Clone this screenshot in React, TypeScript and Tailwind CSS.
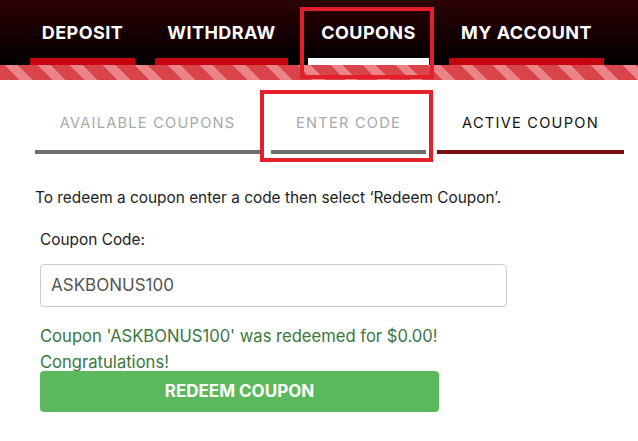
const mainTabs = [
  { label: "DEPOSIT", w: "w-[105px]", bar: "bg-[#c4060c]" },
  { label: "WITHDRAW", w: "w-[133px]", bar: "bg-[#c4060c]" },
  { label: "COUPONS", w: "w-[121px]", bar: "bg-white" },
  { label: "MY ACCOUNT", w: "w-[155px]", bar: "bg-[#c4060c]" },
]

const subTabs = [
  { label: "AVAILABLE COUPONS", w: "w-[225px]", text: "text-[#a8a8a8]", bar: "bg-[#6e6e6e]" },
  { label: "ENTER CODE", w: "w-[155px]", text: "text-[#a8a8a8]", bar: "bg-[#6e6e6e]" },
  { label: "ACTIVE COUPON", w: "w-[187px]", text: "text-[#111]", bar: "bg-[#7a1014]" },
]

export default function App() {
  return (
    <div className="relative w-[638px] h-[441px] overflow-hidden bg-white font-['Inter',sans-serif]">
      {/* top nav */}
      <div className="h-[65px] bg-[linear-gradient(180deg,#2c0306_0%,#140002_55%,#000_100%)] flex items-end gap-5 pl-[30px]">
        {mainTabs.map((t) => (
          <div key={t.label} className={`${t.w} flex flex-col items-center`}>
            <span className="text-white font-bold text-[18px] tracking-[0.025em] leading-[20px] mb-[15px]">{t.label}</span>
            <div className={`h-[7px] w-full ${t.bar}`} />
          </div>
        ))}
      </div>
      <div className="h-[15px] bg-[repeating-linear-gradient(45deg,#d9434a_0px,#d9434a_14px,#eb8488_14px,#eb8488_23px)]" />

      {/* sub tabs */}
      <div className="flex gap-[11px] pl-[35px] pt-[33px]">
        {subTabs.map((t) => (
          <div key={t.label} className={`${t.w} flex flex-col items-center`}>
            <span className={`${t.text} text-[14.6px] tracking-[0.085em] leading-[20px]`}>{t.label}</span>
            <div className={`mt-[17px] h-[4px] w-full ${t.bar}`} />
          </div>
        ))}
      </div>

      {/* form */}
      <div className="pl-[35px] pt-[34px]">
        <p className="text-[15.4px] leading-[20px] text-[#222]">
          To redeem a coupon enter a code then select ‘Redeem Coupon’.
        </p>
        <div className="pl-[5px]">
          <p className="mt-[22px] text-[15.4px] leading-[20px] text-[#222]">Coupon Code:</p>
          <div className="mt-[14px] h-[43px] w-[467px] rounded-[4px] border border-[#ccc] flex items-center px-[10px]">
            <span className="text-[17px] text-[#555]">ASKBONUS100</span>
          </div>
          <div className="mt-[16px] w-[399px] text-[16.6px] leading-[26px] text-[#3c763d]">
            <p>Coupon 'ASKBONUS100' was redeemed for $0.00!</p>
            <p>Congratulations!</p>
          </div>
          <button className="mt-[-4px] h-[41px] w-[399px] rounded-[4px] bg-[#5cb85c] text-white font-bold text-[17px]">
            REDEEM COUPON
          </button>
        </div>
      </div>

      {/* highlight boxes */}
      <div className="absolute left-[300px] top-[7px] w-[134px] h-[72px] border-4 border-[#e3202a]" />
      <div className="absolute left-[260px] top-[90px] w-[173px] h-[72px] border-4 border-[#e3202a]" />
    </div>
  )
}
